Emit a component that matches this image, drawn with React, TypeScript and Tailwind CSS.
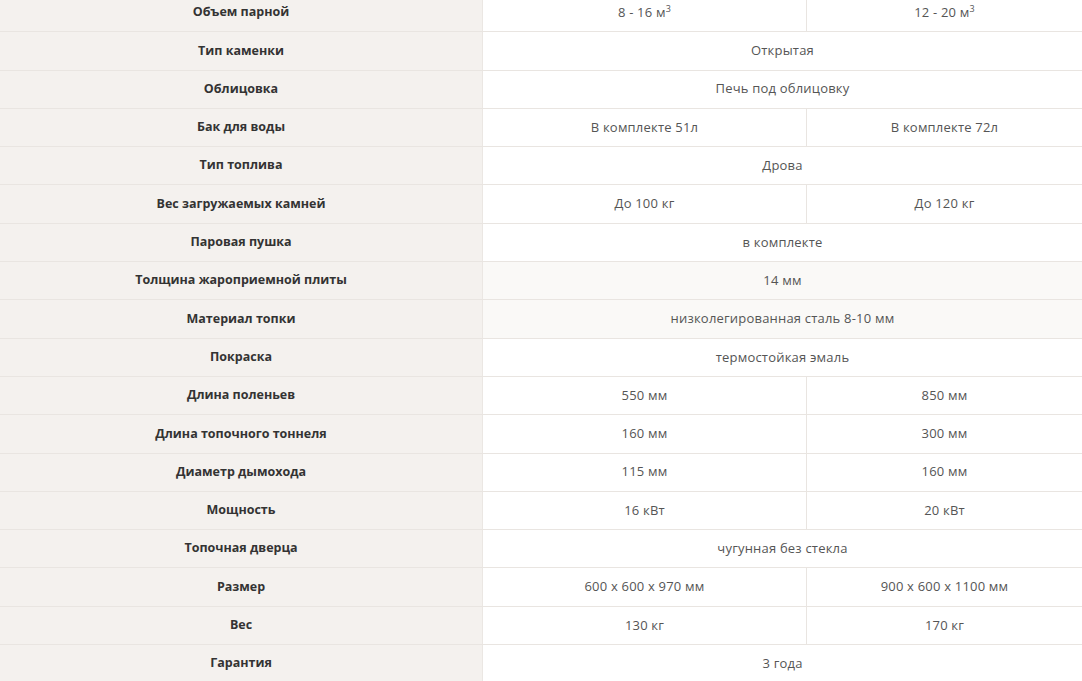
type Row = { label: string; values: string[]; tint?: boolean };

const rows: Row[] = [
  { label: "Объем парной", values: ["8 - 16 м³", "12 - 20 м³"] },
  { label: "Тип каменки", values: ["Открытая"] },
  { label: "Облицовка", values: ["Печь под облицовку"] },
  { label: "Бак для воды", values: ["В комплекте 51л", "В комплекте 72л"] },
  { label: "Тип топлива", values: ["Дрова"] },
  { label: "Вес загружаемых камней", values: ["До 100 кг", "До 120 кг"] },
  { label: "Паровая пушка", values: ["в комплекте"] },
  { label: "Толщина жароприемной плиты", values: ["14 мм"], tint: true },
  { label: "Материал топки", values: ["низколегированная сталь 8-10 мм"], tint: true },
  { label: "Покраска", values: ["термостойкая эмаль"] },
  { label: "Длина поленьев", values: ["550 мм", "850 мм"] },
  { label: "Длина топочного тоннеля", values: ["160 мм", "300 мм"] },
  { label: "Диаметр дымохода", values: ["115 мм", "160 мм"] },
  { label: "Мощность", values: ["16 кВт", "20 кВт"] },
  { label: "Топочная дверца", values: ["чугунная без стекла"] },
  { label: "Размер", values: ["600 x 600 x 970 мм", "900 x 600 x 1100 мм"] },
  { label: "Вес", values: ["130 кг", "170 кг"] },
  { label: "Гарантия", values: ["3 года"] },
];

function Value({ text }: { text: string }) {
  const m = text.match(/^(.*)м³$/);
  if (m) {
    return (
      <span>
        {m[1]}м<sup className="text-[9px] relative -top-[5px]">3</sup>
      </span>
    );
  }
  return <span>{text}</span>;
}

export default function App() {
  return (
    <div
      className="w-[1082px] h-[681px] overflow-hidden bg-white"
      style={{ fontFamily: '"Open Sans", "Noto Sans", sans-serif' }}
    >
      <div className="-mt-[6px]">
        {rows.map((r, i) => (
          <div
            key={i}
            className="grid grid-cols-[483px_324px_275px] h-[38.3px] border-b border-[#e9e5e1]"
          >
            <div className="bg-[#f4f1ee] border-r border-[#ebe7e3] flex items-center justify-center text-[12.5px] font-bold text-[#333]">
              {r.label}
            </div>
            {r.values.length === 1 ? (
              <div
                className={`col-span-2 flex items-center justify-center text-[13px] tracking-[0.2px] text-[#555] ${
                  r.tint ? "bg-[#faf9f7]" : "bg-white"
                }`}
              >
                <Value text={r.values[0]} />
              </div>
            ) : (
              <>
                <div className="border-r border-[#e9e5e1] flex items-center justify-center text-[13px] tracking-[0.2px] text-[#555]">
                  <Value text={r.values[0]} />
                </div>
                <div className="flex items-center justify-center text-[13px] tracking-[0.2px] text-[#555]">
                  <Value text={r.values[1]} />
                </div>
              </>
            )}
          </div>
        ))}
      </div>
    </div>
  );
}
